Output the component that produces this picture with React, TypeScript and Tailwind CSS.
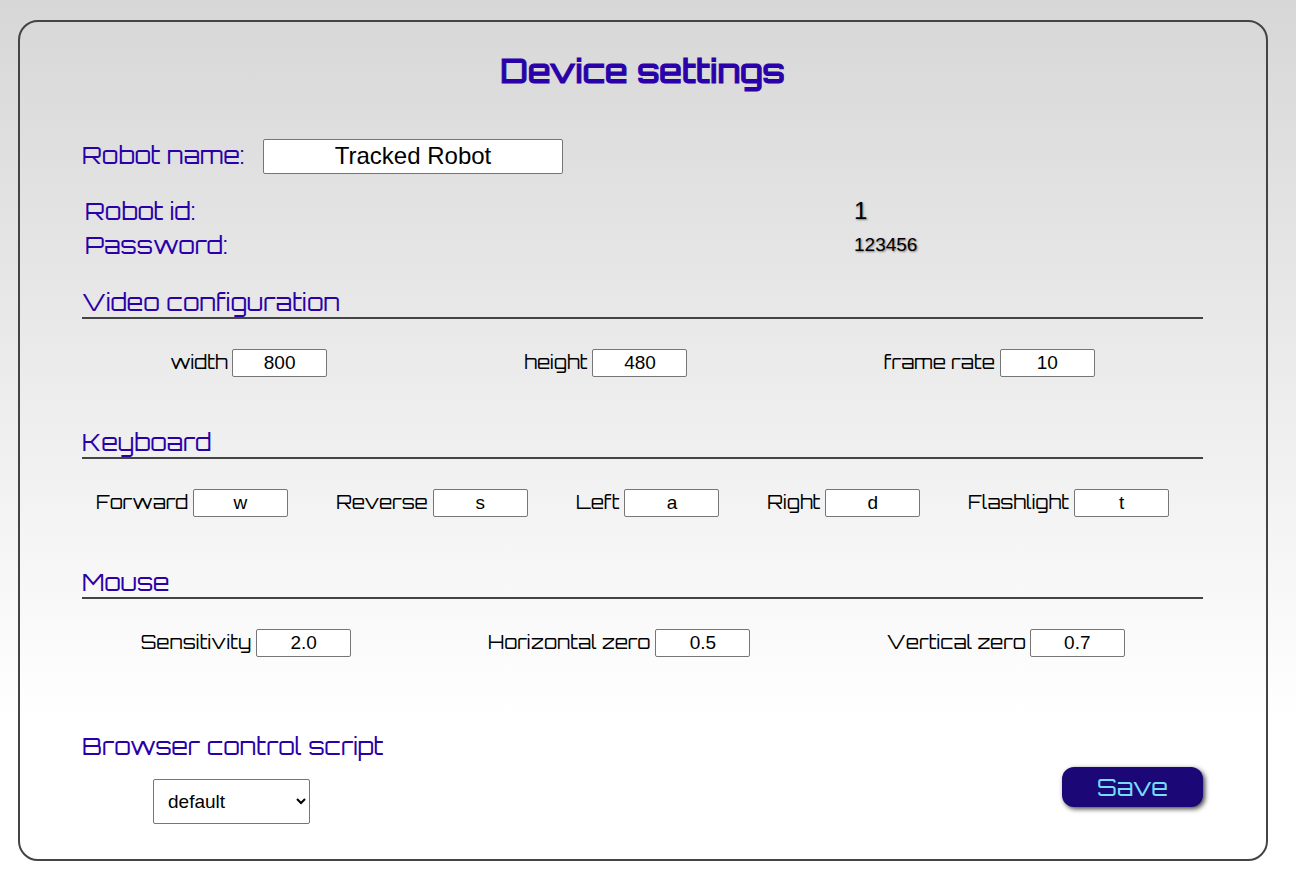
import React, { useId } from "react";

type FieldProps = { label: string; value: string; labelClass: string };

function Field({ label, value, labelClass }: FieldProps) {
  const id = useId();
  return (
    <div className="flex items-center gap-[5px]">
      <label htmlFor={id} className={`whitespace-nowrap pb-0.5 text-right text-[19px] leading-6 ${labelClass}`}>
        {label}
      </label>
      <input
        id={id}
        defaultValue={value}
        className="h-7 w-[95px] rounded-xs border border-[#767676] bg-white text-center font-['Liberation_Sans',Arial,sans-serif] text-[19px]"
      />
    </div>
  );
}

function Section({ title, fields }: { title: string; fields: FieldProps[] }) {
  return (
    <section className="h-[140px]">
      <h2 className="h-[34px] border-b-2 border-[#444] text-2xl leading-[34px] text-[#2a00a8]">{title}</h2>
      <div className="-ml-2.5 mr-2.5 mt-[30px] flex justify-around">
        {fields.map((f) => (
          <Field key={f.label} {...f} />
        ))}
      </div>
    </section>
  );
}

const video: FieldProps[] = [
  { label: "width", value: "800", labelClass: "w-[57px]" },
  { label: "height", value: "480", labelClass: "w-[64px]" },
  { label: "frame rate", value: "10", labelClass: "w-[111px]" },
];

const keyboard: FieldProps[] = [
  { label: "Forward", value: "w", labelClass: "w-[92px]" },
  { label: "Reverse", value: "s", labelClass: "w-[92px]" },
  { label: "Left", value: "a", labelClass: "w-[44px]" },
  { label: "Right", value: "d", labelClass: "w-[53px]" },
  { label: "Flashlight", value: "t", labelClass: "w-[101px]" },
];

const mouse: FieldProps[] = [
  { label: "Sensitivity", value: "2.0", labelClass: "w-[111px]" },
  { label: "Horizontal zero", value: "0.5", labelClass: "w-[163px]" },
  { label: "Vertical zero", value: "0.7", labelClass: "w-[138px]" },
];

export default function App() {
  return (
    <div className="min-h-screen bg-white bg-linear-to-b from-[#d7d7d7] to-white to-[720px] pb-[23px] pl-[18px] pr-7 pt-5 font-['Orbitron','DejaVu_Sans',sans-serif] text-black">
      <form
        onSubmit={(e) => e.preventDefault()}
        className="rounded-[20px] border-2 border-[#444] pb-[35px] pl-[62px] pr-[63px] pt-[26px]"
      >
        <h1 className="text-center text-[33px] font-medium leading-[46px] text-[#2a00a8] [-webkit-text-stroke:1px_#2a00a8]">
          Device settings
        </h1>

        <div className="mt-[45px] flex items-center">
          <label htmlFor="robot-name" className="w-[181px] whitespace-nowrap pb-1 text-2xl leading-7 text-[#2a00a8]">
            Robot name:
          </label>
          <input
            id="robot-name"
            defaultValue="Tracked Robot"
            className="h-[35px] w-[300px] rounded-xs border border-[#767676] bg-white pb-0.5 text-center font-['Liberation_Sans',Arial,sans-serif] text-2xl"
          />
        </div>

        <table className="mt-5 w-full text-left">
          <tbody>
            <tr className="h-[34px]">
              <th scope="row" className="w-[68.6%] pl-[3px] text-2xl font-normal text-[#2a00a8]">Robot id:</th>
              <td className="pl-[3px] font-['Liberation_Sans',Arial,sans-serif] text-2xl [text-shadow:1px_1px_2px_#777]">1</td>
            </tr>
            <tr className="h-[34px]">
              <th scope="row" className="pl-[3px] text-2xl font-normal text-[#2a00a8]">Password:</th>
              <td className="pl-[3px] font-['Liberation_Sans',Arial,sans-serif] text-[19px] [text-shadow:1px_1px_2px_#777]">123456</td>
            </tr>
          </tbody>
        </table>

        <div className="mt-[23px]">
          <Section title="Video configuration" fields={video} />
          <Section title="Keyboard" fields={keyboard} />
          <Section title="Mouse" fields={mouse} />
        </div>

        <div className="mt-6 flex items-end justify-between">
          <div>
            <label htmlFor="script" className="block text-2xl leading-[34px] text-[#2a00a8]">
              Browser control script
            </label>
            <select
              id="script"
              className="ml-[71px] mt-4 block h-[45px] w-[157px] rounded-xs border border-[#767676] bg-white px-2.5 font-['Liberation_Sans',Arial,sans-serif] text-[19px]"
            >
              <option>default</option>
            </select>
          </div>
          <button
            type="submit"
            className="mb-[17px] h-10 w-[141px] rounded-xl bg-[#1c0777] text-2xl leading-8 text-[#7df] shadow-[2px_2px_5px_#444]"
          >
            Save
          </button>
        </div>
      </form>
    </div>
  );
}
